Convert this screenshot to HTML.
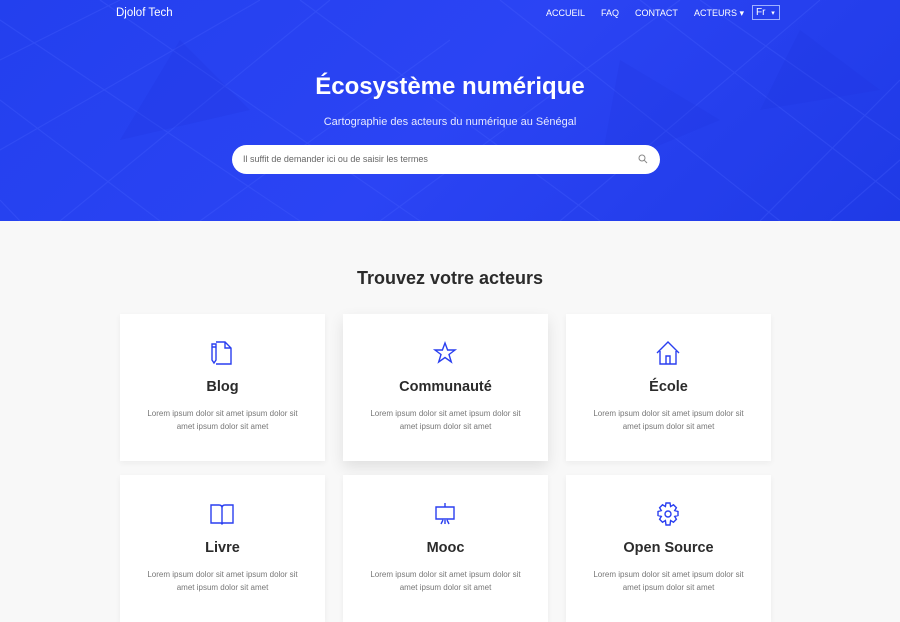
<!DOCTYPE html>
<html><head><meta charset="utf-8"><style>
*{margin:0;padding:0;box-sizing:border-box}
html,body{width:900px;height:600px;overflow:hidden}
body{background:#f8f8f8;font-family:"Liberation Sans",sans-serif}
.hero{position:relative;height:221px;background:linear-gradient(135deg,#2340ee 0%,#2b44f4 50%,#1f3ae6 100%);overflow:hidden}
.hero svg.bg{position:absolute;left:0;top:0}
.nav{position:absolute;top:0;left:0;width:900px;height:26px;color:#fff}
.brand{position:absolute;left:116px;top:7px;font-size:11.5px}
.links{position:absolute;top:8px;font-size:9px;color:#fff}
.fr{position:absolute;left:752px;top:5px;width:28px;height:15px;border:1px solid #9fb0ff;font-size:10px;padding:1px 3px;color:#fff}
h1{position:absolute;top:73px;width:900px;text-align:center;color:#fff;font-size:24px;font-weight:bold}
.sub{position:absolute;top:116px;width:900px;text-align:center;color:#e6e9ff;font-size:11px}
.search{position:absolute;left:232px;top:145px;width:428px;height:29px;background:#fff;border-radius:15px;font-size:9px;color:#666;padding:9px 11px}
h2{position:absolute;top:268px;width:900px;text-align:center;font-size:18px;color:#2b2b2b;font-weight:bold}
.card{position:absolute;width:205px;height:147px;background:#fff;box-shadow:0 2px 6px rgba(0,0,0,.05);text-align:center}
.card svg{position:absolute;left:89px;top:26px}
.card .t{position:absolute;top:65px;width:100%;font-size:14.5px;font-weight:bold;color:#2b2b2b}
.card .d{position:absolute;top:93px;width:100%;font-size:8px;line-height:13px;color:#777;padding:0 21px}
</style></head><body>
<div class="hero">
<svg class="bg" width="900" height="221" stroke="#4a63ff" stroke-opacity=".3" fill="none" stroke-width="1.2">
<path d="M0 60L120 0M0 150L260 0M60 221L330 0M200 221L450 40M0 100L160 221M100 0L420 221M300 0L600 221M500 0L780 221M700 0L900 140M560 221L820 0M760 221L900 80M0 20L300 221M380 221L680 0M640 0L900 200M830 221L900 160M20 221L0 200"/>
<path d="M180 40L250 110L120 140ZM620 60L720 120L600 170ZM800 30L880 90L760 110Z" fill="#1c34dc" fill-opacity=".2" stroke="none"/>
</svg>
<div class="nav"><div class="brand">Djolof Tech</div>
<div class="links" style="left:546px">ACCUEIL</div>
<div class="links" style="left:601px">FAQ</div>
<div class="links" style="left:635px">CONTACT</div>
<div class="links" style="left:694px">ACTEURS ▾</div>
<div class="fr">Fr <span style="font-size:7px;margin-left:3px">▾</span></div></div>
<h1>Écosystème numérique</h1>
<div class="sub">Cartographie des acteurs du numérique au Sénégal</div>
<div class="search">Il suffit de demander ici ou de saisir les termes<svg style="position:absolute;right:12px;top:9px" width="10" height="10" stroke="#888" fill="none"><circle cx="4" cy="4" r="3"/><path d="M6.2 6.2L9 9"/></svg></div>
</div>
<h2>Trouvez votre acteurs</h2>

<div class="card" style="left:120px;top:314px"><svg width="26" height="26" viewBox="0 0 26 26" stroke="#2a3ff0" fill="none" stroke-width="1.4"><path d="M7 2H16L22 8V24H7M16 2V8H22"/><path d="M3 4H7V20L5 23L3 20ZM3 7H7"/></svg><div class="t">Blog</div><div class="d">Lorem ipsum dolor sit amet ipsum dolor sit amet ipsum dolor sit amet</div></div>
<div class="card" style="left:343px;top:314px;box-shadow:0 6px 14px rgba(0,0,0,.1)"><svg width="26" height="26" viewBox="0 0 26 26" stroke="#2a3ff0" fill="none" stroke-width="1.4"><path d="M13 3L15.6 10H23L17 14.5L19.3 22L13 17.5L6.7 22L9 14.5L3 10H10.4Z"/></svg><div class="t">Communauté</div><div class="d">Lorem ipsum dolor sit amet ipsum dolor sit amet ipsum dolor sit amet</div></div>
<div class="card" style="left:566px;top:314px"><svg width="26" height="26" viewBox="0 0 26 26" stroke="#2a3ff0" fill="none" stroke-width="1.4"><path d="M2 13L13 2L24 13M5 11V24H21V11M11 24V16H15V24"/></svg><div class="t">École</div><div class="d">Lorem ipsum dolor sit amet ipsum dolor sit amet ipsum dolor sit amet</div></div>
<div class="card" style="left:120px;top:475px"><svg width="26" height="26" viewBox="0 0 26 26" stroke="#2a3ff0" fill="none" stroke-width="1.4"><path d="M2 4H10Q13 4 13 7Q13 4 16 4H24V22H14L13 23L12 22H2ZM13 7V22"/></svg><div class="t">Livre</div><div class="d">Lorem ipsum dolor sit amet ipsum dolor sit amet ipsum dolor sit amet</div></div>
<div class="card" style="left:343px;top:475px"><svg width="26" height="26" viewBox="0 0 26 26" stroke="#2a3ff0" fill="none" stroke-width="1.4"><path d="M4 6H22V18H4ZM13 2V6M4 18H22M11 19L9 23M15 19L17 23M13 19V23"/></svg><div class="t">Mooc</div><div class="d">Lorem ipsum dolor sit amet ipsum dolor sit amet ipsum dolor sit amet</div></div>
<div class="card" style="left:566px;top:475px"><svg width="26" height="26" viewBox="0 0 26 26" stroke="#2a3ff0" fill="none" stroke-width="1.4"><circle cx="13" cy="13" r="3"/><path d="M11 2H15L15.6 5.5L18.5 3.8L21.4 6.7L19.7 9.6L23 10.5V14.5L19.7 15.4L21.4 18.3L18.5 21.2L15.6 19.5L15 24H11L10.4 19.5L7.5 21.2L4.6 18.3L6.3 15.4L3 14.5V10.5L6.3 9.6L4.6 6.7L7.5 3.8L10.4 5.5Z"/></svg><div class="t">Open Source</div><div class="d">Lorem ipsum dolor sit amet ipsum dolor sit amet ipsum dolor sit amet</div></div>
</body></html>
